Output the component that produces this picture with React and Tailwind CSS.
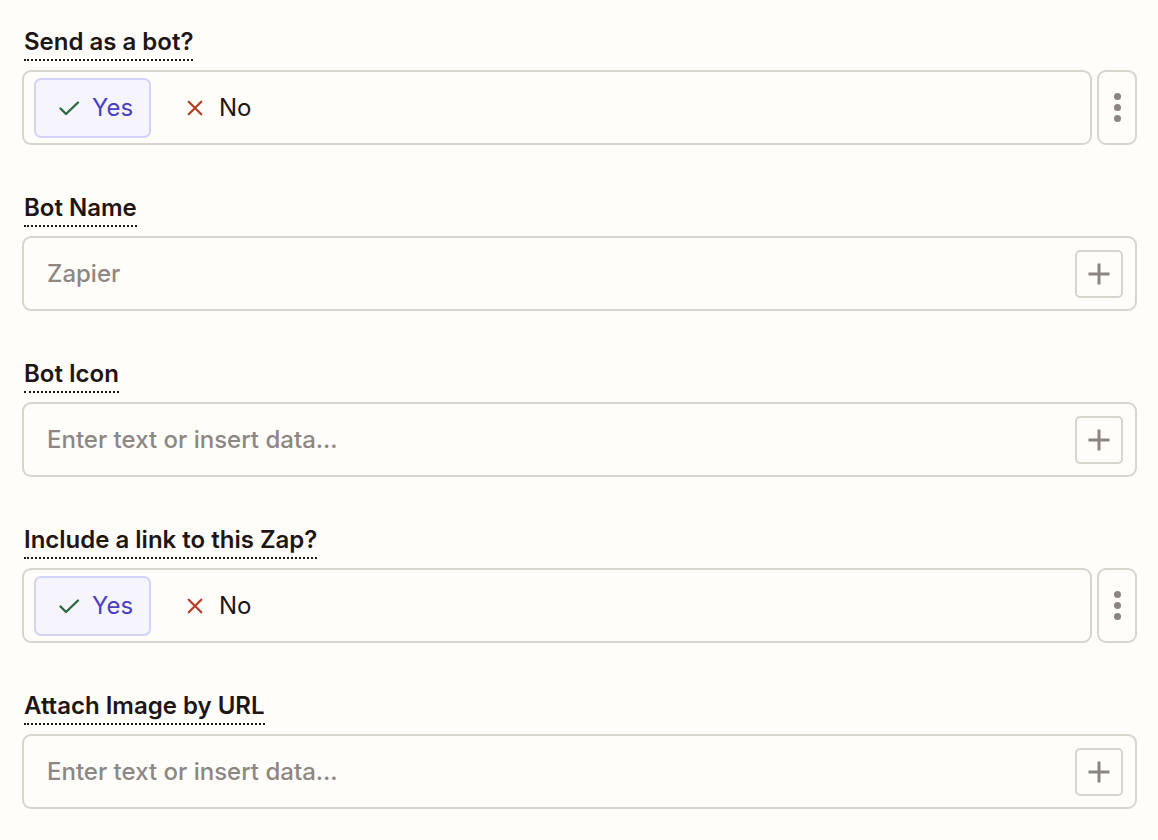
import React from "react";

const font = { fontFamily: "Inter, 'Noto Sans', sans-serif" };

function Label({ children }) {
  return (
    <div className="flex pl-[2px]">
      <span className="text-[24px] font-semibold leading-[28px] text-[#201515] pb-[3px] border-b-2 border-dotted border-[#201515]">
        {children}
      </span>
    </div>
  );
}

function Check() {
  return (
    <svg width="24" height="24" viewBox="0 0 24 24" fill="none" stroke="#2d6a3d" strokeWidth="2.4" strokeLinecap="round" strokeLinejoin="round">
      <path d="M3.5 12.5l5.5 5.5L21 6.5" />
    </svg>
  );
}

function Cross() {
  return (
    <svg width="20" height="20" viewBox="0 0 24 24" fill="none" stroke="#b5412b" strokeWidth="2.8" strokeLinecap="round">
      <path d="M4.5 4.5l15 15M19.5 4.5l-15 15" />
    </svg>
  );
}

function YesNo() {
  return (
    <div className="flex gap-[5px]">
      <div className="flex-1 h-[75px] rounded-[9px] border-2 border-[#d7d5ce] flex items-center pl-[10px]">
        <div className="h-[60px] w-[117px] rounded-[7px] border-2 border-[#d3d3fa] bg-[#f6f5fe] flex items-center pl-[21px] gap-[11px]">
          <Check />
          <span className="text-[24px] font-normal text-[#4a3ec2]">Yes</span>
        </div>
        <div className="flex items-center ml-[34px] gap-[14px]">
          <Cross />
          <span className="text-[24px] font-normal text-[#201515]">No</span>
        </div>
      </div>
      <div className="w-[40px] h-[75px] rounded-[9px] border-2 border-[#d7d5ce] flex flex-col items-center justify-center gap-[4px]">
        <span className="w-[7px] h-[7px] rounded-full bg-[#8a8581]" />
        <span className="w-[7px] h-[7px] rounded-full bg-[#8a8581]" />
        <span className="w-[7px] h-[7px] rounded-full bg-[#8a8581]" />
      </div>
    </div>
  );
}

function TextInput({ placeholder }) {
  return (
    <div className="h-[75px] rounded-[9px] border-2 border-[#d7d5ce] flex items-center pl-[23px] pr-[12px]">
      <span className="flex-1 text-[24px] font-medium text-[#8d8783]">{placeholder}</span>
      <div className="w-[48px] h-[48px] rounded-[5px] border-2 border-[#d7d5ce] flex items-center justify-center">
        <svg width="24" height="24" viewBox="0 0 24 24" fill="none" stroke="#8a8581" strokeWidth="3">
          <path d="M12 1.5v21M1.5 12h21" />
        </svg>
      </div>
    </div>
  );
}

function Field({ label, children }) {
  return (
    <div className="flex flex-col gap-[9px]">
      <Label>{label}</Label>
      {children}
    </div>
  );
}

export default function App() {
  return (
    <div style={font} className="w-[1158px] h-[840px] bg-[#fffdf9] pl-[22px] pr-[21px] pt-[28px] flex flex-col gap-[49px]">
      <Field label="Send as a bot?">
        <YesNo />
      </Field>
      <Field label="Bot Name">
        <TextInput placeholder="Zapier" />
      </Field>
      <Field label="Bot Icon">
        <TextInput placeholder="Enter text or insert data..." />
      </Field>
      <Field label="Include a link to this Zap?">
        <YesNo />
      </Field>
      <Field label="Attach Image by URL">
        <TextInput placeholder="Enter text or insert data..." />
      </Field>
    </div>
  );
}
